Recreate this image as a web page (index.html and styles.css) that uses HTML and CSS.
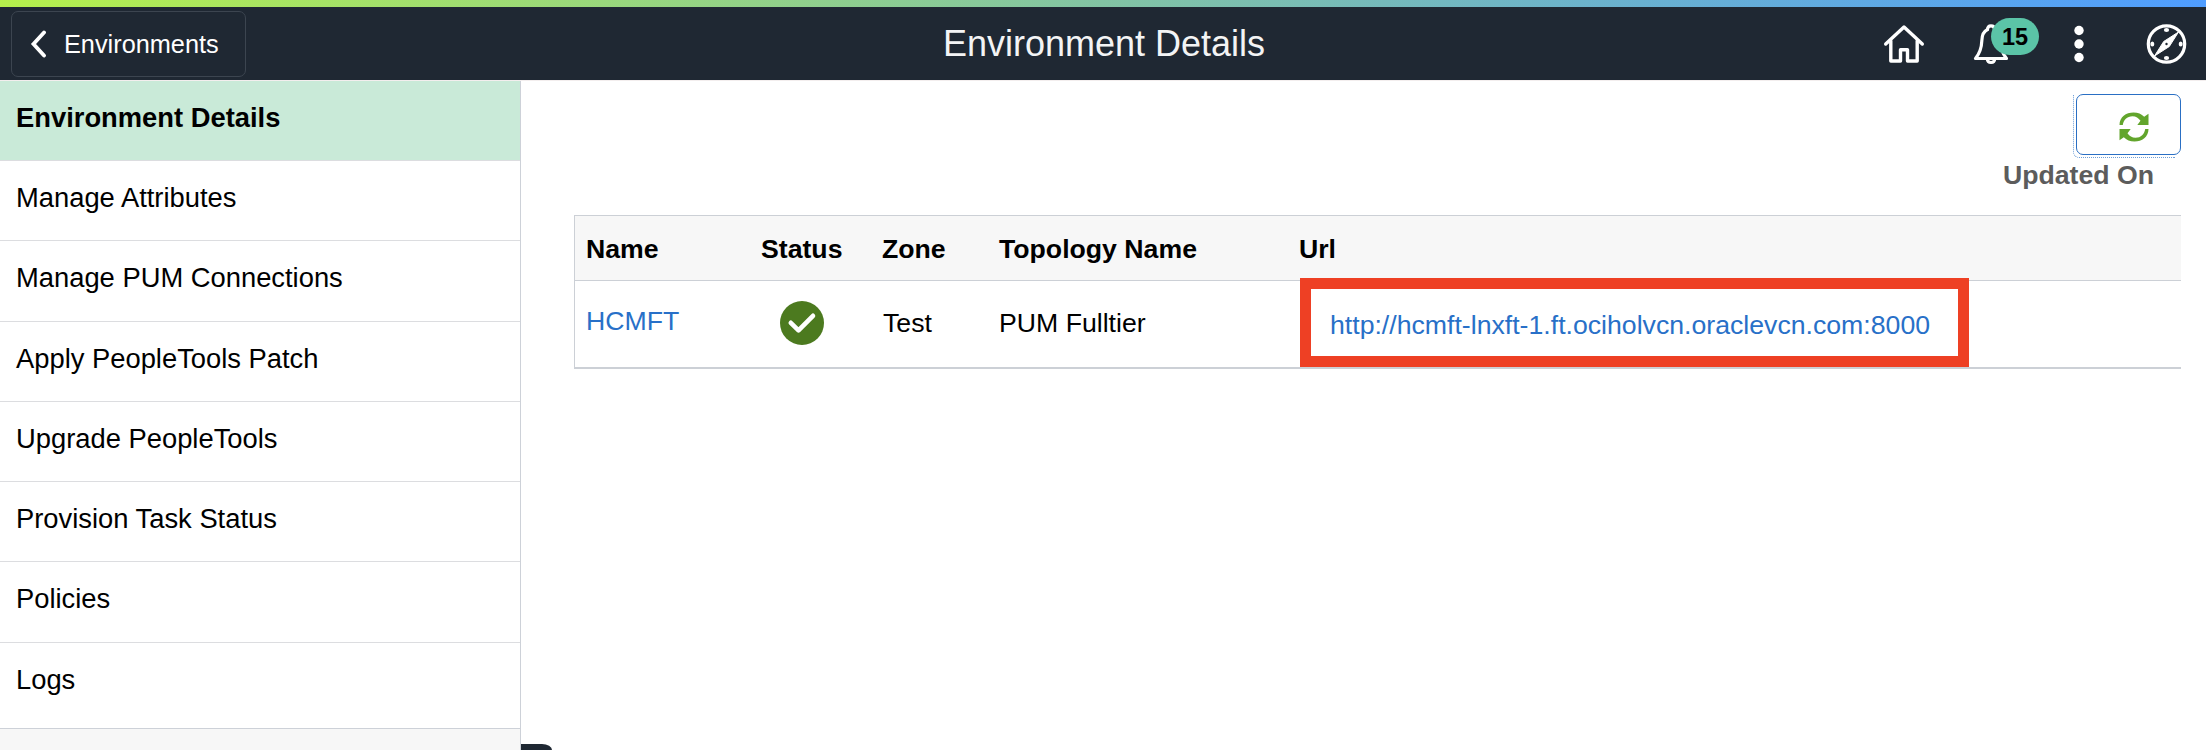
FILE: index.html
```
<!DOCTYPE html>
<html lang="en">
<head>
<meta charset="utf-8">
<title>Environment Details</title>
<link rel="stylesheet" href="styles.css">
</head>
<body>
<header class="header">
  <div class="header-left">
    <button class="back">
      <svg class="back-icon" width="18" height="28" viewBox="0 0 18 28"><path d="M14 2.500L3.500 14L14 25.500" fill="none" stroke="#fff" stroke-width="3.800" stroke-linecap="round" stroke-linejoin="miter"/></svg>
      <span>Environments</span>
    </button>
  </div>
  <h1 class="title">Environment Details</h1>
  <div class="header-right">
    <svg class="icon-home" width="44" height="42" viewBox="0 0 44 42" fill="none" stroke="#fff" stroke-width="3.400" stroke-linecap="round" stroke-linejoin="round"><path d="M3.700 21L22 4L40.300 21"/><path d="M8.800 18V38H18.500V26.800H25.500V38H35.200V18"/></svg>
    <div class="bell">
      <svg width="36" height="42" viewBox="0 0 36 42" fill="none" stroke="#fff" stroke-width="3.200" stroke-linecap="round" stroke-linejoin="round"><path d="M14.500 6.500Q9 9 8.800 18Q8.500 28 2.500 35.500H33.500Q27.500 28 27.200 18Q27 9 21.500 6.500"/><path d="M14.500 6.500Q14.500 2.800 18 2.800Q21.500 2.800 21.500 6.500"/><path d="M14.300 36Q14.500 39.500 18 39.500Q21.500 39.500 21.700 36"/></svg>
      <span class="badge">15</span>
    </div>
    <svg class="icon-dots" width="12" height="40" viewBox="0 0 12 40" fill="#fff"><circle cx="6" cy="6.500" r="4.700"/><circle cx="6" cy="20" r="4.700"/><circle cx="6" cy="33.500" r="4.700"/></svg>
    <svg class="icon-compass" width="42" height="42" viewBox="0 0 42 42"><circle cx="21.500" cy="21" r="18.200" fill="none" stroke="#fff" stroke-width="3.200"/><path d="M33.500 9L24.300 23.500L9.500 33L18.700 18.500Z" fill="#fff" stroke="#fff" stroke-width="1" stroke-linejoin="round"/><circle cx="21.500" cy="21" r="1.200" fill="#1f2833"/><g fill="#fff"><ellipse cx="21.500" cy="7" rx="2.600" ry="2"/><ellipse cx="21.500" cy="35" rx="2.600" ry="2"/><ellipse cx="7.300" cy="21" rx="2" ry="2.600"/><ellipse cx="35.700" cy="21" rx="2" ry="2.600"/></g></svg>
  </div>
</header>
<div class="body">
  <nav class="sidebar">
    <a class="item active">Environment Details</a>
    <a class="item">Manage Attributes</a>
    <a class="item tall">Manage PUM Connections</a>
    <a class="item">Apply PeopleTools Patch</a>
    <a class="item">Upgrade PeopleTools</a>
    <a class="item">Provision Task Status</a>
    <a class="item tall">Policies</a>
    <a class="item last">Logs</a>
  </nav>
  <main class="main">
    <div class="actions">
      <button class="refresh"><svg width="30" height="30" viewBox="0 0 30 30" fill="#62a52c"><path d="M0.500 13C0.500 5 7 0.500 14.500 0.500C19 0.500 22.500 2 25.200 4.800L29.500 1.800V13H18.300L21.500 8.800C19.500 6 17 4.200 13.500 4.200C8 4.200 4.500 8 3.800 13Z"/><path d="M29.500 17C29.500 25 23 29.500 15.500 29.500C11 29.500 7.500 28 4.800 25.200L0.500 28.200V17H11.700L8.500 21.200C10.500 24 13 25.800 16.500 25.800C22 25.800 25.500 22 26.200 17Z"/></svg></button>
      <div class="updated">Updated On</div>
    </div>
    <div class="table">
      <div class="row head"><span>Name</span><span>Status</span><span>Zone</span><span>Topology Name</span><span>Url</span></div>
      <div class="row data">
        <a class="link name">HCMFT</a>
        <svg class="status" width="44" height="44" viewBox="0 0 44 44"><circle cx="22" cy="22" r="22" fill="#4c7a1f"/><path d="M10.800 21.800L18.500 29.300L33 14.800" fill="none" stroke="#fff" stroke-width="4.600" stroke-linecap="round" stroke-linejoin="round"/></svg>
        <span class="zone">Test</span><span>PUM Fulltier</span>
        <div class="highlight"><a class="link">http://hcmft-lnxft-1.ft.ociholvcn.oraclevcn.com:8000</a></div>
      </div>
    </div>
    <div class="handle"></div>
  </main>
</div>
</body>
</html>
```
FILE: styles.css
```
* { box-sizing: border-box; }
body {
  margin: 0;
  width: 2206px;
  height: 750px;
  overflow: hidden;
  background: #fff;
  color: #000;
  font-family: "Liberation Sans", Arial, sans-serif;
  font-size: 26.66px;
  line-height: 32px;
}
button { font: inherit; margin: 0; padding: 0; background: none; }

.header {
  display: grid;
  grid-template-columns: 1fr auto 1fr;
  height: 81px;
  padding-top: 7px;
  border-bottom: 1px solid #f3eeee;
  background:
    linear-gradient(90deg, #b5f04c, #82c4a4 50%, #4f9dff) 0 0 / 100% 7px no-repeat,
    #1f2833;
}
.header-left { padding: 4px 0 0 11px; }
.back {
  display: flex;
  align-items: center;
  gap: 16px;
  width: 235px;
  height: 66px;
  padding: 0 0 1px 18px;
  border: 1px solid #3c4550;
  border-radius: 7px;
  color: #fff;
  font-size: 25.3px;
}
.title {
  margin: 0;
  padding: 17px 0 0 2px;
  color: #f3f4f5;
  font-size: 36px;
  font-weight: 400;
  line-height: 40px;
}
.header-right { display: flex; align-items: flex-start; justify-content: flex-end; padding-right: 19px; }
.icon-home { margin: 16px 47px 0 0; }
.bell { position: relative; height: 42px; margin: 16px 64px 0 0; }
.badge {
  position: absolute;
  left: 18px;
  top: -5px;
  width: 48px;
  height: 37px;
  border-radius: 19px;
  background: #5bc4a7;
  color: #000;
  font-size: 23.5px;
  font-weight: 700;
  line-height: 38px;
  text-align: center;
}
.icon-dots { margin: 17px 60px 0 0; }
.icon-compass { margin-top: 16px; }

.body { display: flex; height: 669px; }
.sidebar { width: 521px; border-right: 1px solid #cdd1d8; background: #f7f7f7; }
.item {
  display: block;
  height: 80px;
  padding: 21px 0 0 16px;
  border-bottom: 1px solid #dcdde0;
  background: #fff;
  font-size: 27.35px;
}
.item.tall { height: 81px; }
.item.last { height: 86px; border-color: #cdd1d8; }
.item.active { background: #c9ead8; font-weight: 700; }

.main { position: relative; flex: 1; padding: 13px 25px 0 53px; }
.actions { display: flex; flex-direction: column; align-items: flex-end; height: 121px; }
.refresh {
  display: flex;
  align-items: center;
  justify-content: center;
  position: relative;
  width: 105px;
  height: 61px;
  padding: 4px 0 0 10px;
  border: 1px solid #2a6fc4;
  border-radius: 7px;
}
.refresh::after {
  content: "";
  position: absolute;
  inset: 0 5px -4px -4px;
  border: 1px dotted #6f9fd8;
  border-width: 0 0 1px 1px;
  border-radius: 0 0 0 6px;
}
.updated { padding: 4px 27px 0 0; color: #5c5c5c; font-weight: 700; }

.table { border: 1px solid #ccd0d6; border-width: 1px 0 2px 1px; }
.row {
  display: grid;
  grid-template-columns: 175px 121px 117px 300px 1fr;
  padding-left: 11px;
}
.head { height: 65px; padding-top: 17px; border-bottom: 1px solid #ccd0d6; background: #f7f7f7; font-weight: 700; }
.data { height: 86px; padding-top: 35px; }
.link { color: #2870c8; }
.name { margin-top: -11px; }
.data > span { margin-top: -9px; }
.data .zone { padding-left: 1px; }
.status { margin: -15px 0 0 19px; }
.highlight {
  position: relative;
  width: 669px;
  height: 89px;
  margin: -38px 0 0 1px;
  padding: 20px 0 0 19px;
  border: 11px solid #ee4024;
}
.handle { position: absolute; left: 0; bottom: 0; width: 31px; height: 6px; border-radius: 0 10px 0 0 / 0 6px 0 0; background: #1f2833; }
```
